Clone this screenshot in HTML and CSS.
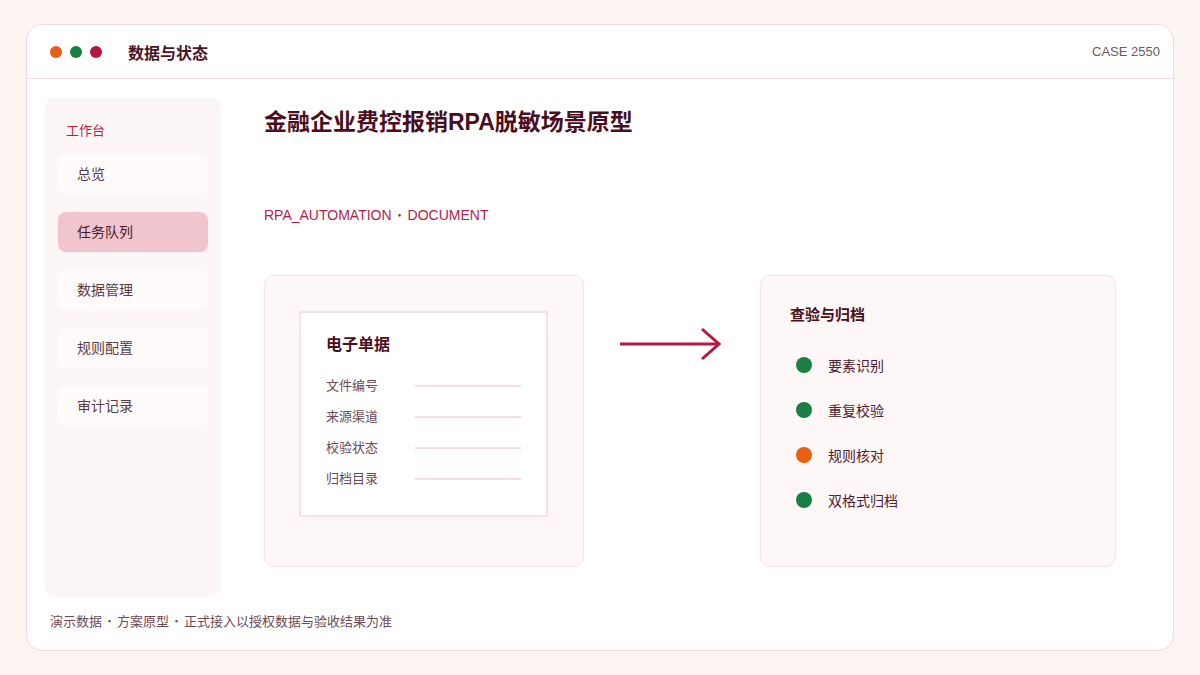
FILE: index.html
```html
<!DOCTYPE html>
<html lang="zh-CN">
<head>
    <meta charset="UTF-8">
    <meta name="viewport" content="width=device-width, initial-scale=1.0">
    <title>数据与状态</title>
    <link rel="stylesheet" href="styles.css">
</head>
<body>
    <div class="frame">
        <div class="topbar">
            <div class="dots">
                <span class="dot orange"></span>
                <span class="dot green"></span>
                <span class="dot red"></span>
            </div>
            <div class="app-title">数据与状态</div>
            <div class="case-no">CASE 2550</div>
        </div>

        <div class="body">
            <div class="sidebar">
                <div class="side-label">工作台</div>
                <div class="nav-item">总览</div>
                <div class="nav-item active">任务队列</div>
                <div class="nav-item">数据管理</div>
                <div class="nav-item">规则配置</div>
                <div class="nav-item">审计记录</div>
            </div>

            <div class="main">
                <h1>金融企业费控报销RPA脱敏场景原型</h1>
                <div class="subtitle">RPA_AUTOMATION<span class="sep">·</span>DOCUMENT</div>

                <div class="flow">
                    <div class="card">
                        <div class="doc">
                            <h3>电子单据</h3>
                            <div class="doc-row"><span>文件编号</span><i></i></div>
                            <div class="doc-row"><span>来源渠道</span><i></i></div>
                            <div class="doc-row"><span>校验状态</span><i></i></div>
                            <div class="doc-row"><span>归档目录</span><i></i></div>
                        </div>
                    </div>

                    <div class="arrow">
                        <svg width="106" height="36" viewBox="0 0 106 36">
                            <line x1="2" y1="18" x2="100" y2="18" stroke="#b5173f" stroke-width="3"/>
                            <polyline points="84,3 101,18 84,33" fill="none" stroke="#b5173f" stroke-width="3"/>
                        </svg>
                    </div>

                    <div class="card checks">
                        <h3>查验与归档</h3>
                        <ul>
                            <li><span class="status ok"></span>要素识别</li>
                            <li><span class="status ok"></span>重复校验</li>
                            <li><span class="status warn"></span>规则核对</li>
                            <li><span class="status ok"></span>双格式归档</li>
                        </ul>
                    </div>
                </div>
            </div>
        </div>

        <div class="footnote">演示数据<span class="sep">·</span>方案原型<span class="sep">·</span>正式接入以授权数据与验收结果为准</div>
    </div>
</body>
</html>
```

FILE: styles.css
```css
body {
    margin: 0;
    padding: 24px 26px 0;
    background-color: #fdf4f4;
    font-family: "Liberation Sans", "Noto Sans CJK SC", sans-serif;
    color: #4a1a2a;
}
.frame {
    box-sizing: border-box;
    width: 1148px;
    height: 627px;
    background: #fff;
    border: 1px solid #f4d8dd;
    border-radius: 16px;
    display: flex;
    flex-direction: column;
}
.topbar {
    height: 53px;
    border-bottom: 1px solid #f6dfe3;
    display: flex;
    align-items: center;
    padding: 0 13px 0 23px;
}
.dots {
    display: flex;
    gap: 8px;
}
.dot {
    width: 12px;
    height: 12px;
    border-radius: 50%;
}
.dot.orange { background: #e65f17; }
.dot.green { background: #17803f; }
.dot.red { background: #b5173f; }
.app-title {
    margin-left: 26px;
    font-size: 16px;
    font-weight: bold;
    color: #4a1426;
}
.case-no {
    margin-left: auto;
    font-size: 13px;
    color: #6e5860;
}
.body {
    display: flex;
    padding: 18px 0 0 18px;
}
.sidebar {
    box-sizing: border-box;
    width: 176px;
    height: 500px;
    background: #fdf6f6;
    border-radius: 10px;
    padding: 25px 13px;
}
.side-label {
    font-size: 13px;
    line-height: 18px;
    color: #b41e48;
    margin: 0 0 14px 8px;
}
.nav-item {
    height: 40px;
    line-height: 40px;
    padding-left: 19px;
    background: #fffbfb;
    border-radius: 8px;
    font-size: 14px;
    color: #5a3a45;
    margin-bottom: 18px;
}
.nav-item.active {
    background: #f0c5ce;
    color: #4a1a2a;
}
.main {
    margin-left: 43px;
    padding-top: 10px;
}
h1 {
    margin: 0;
    font-size: 23px;
    line-height: 30px;
    color: #4a0e20;
}
.subtitle {
    margin-top: 67px;
    font-size: 14px;
    line-height: 20px;
    color: #b41e48;
}
/* full-width middle dot, taken from the CJK face */
.sep {
    font-family: "Noto Sans CJK SC", sans-serif;
    font-weight: 300;
    padding: 0 1px;
}
.flow {
    margin-top: 50px;
    display: grid;
    grid-template-columns: 320px 176px 356px;
    align-items: start;
}
.card {
    box-sizing: border-box;
    height: 292px;
    background: #fdf7f7;
    border: 1px solid #f6e3e6;
    border-radius: 10px;
}
.doc {
    box-sizing: border-box;
    width: 249px;
    height: 206px;
    margin: 35px 0 0 34px;
    background: #fff;
    border: 2px solid #f6e1e4;
    padding: 21px 25px 0;
}
.doc h3 {
    margin: 0 0 20px;
    font-size: 16px;
    line-height: 22px;
    color: #4a0e20;
}
.doc-row {
    display: flex;
    align-items: center;
    height: 31px;
    font-size: 13px;
    color: #6e4a56;
}
.doc-row span {
    width: 89px;
    line-height: 20px;
    margin-top: -11px;
}
.doc-row i {
    width: 106px;
    height: 2px;
    background: #f6dfe2;
    margin-top: -11px;
}
.arrow {
    display: flex;
    justify-content: center;
    padding-top: 51px;
}
.arrow svg {
    margin-left: -2px;
}
.checks {
    padding: 28px 0 0 29px;
}
.checks h3 {
    margin: 0;
    font-size: 15px;
    line-height: 22px;
    color: #4a0e20;
}
.checks ul {
    list-style: none;
    margin: 27px 0 0;
    padding: 0;
}
.checks li {
    display: flex;
    align-items: center;
    height: 24px;
    margin-bottom: 21px;
    font-size: 14px;
    color: #4f2030;
}
.status {
    width: 16px;
    height: 16px;
    border-radius: 50%;
    margin: 0 16px 0 6px;
}
.status.ok { background: #1b7f44; }
.status.warn { background: #e8600f; }
.footnote {
    margin: 14px 0 0 23px;
    font-size: 13px;
    color: #6e4a56;
}
```
